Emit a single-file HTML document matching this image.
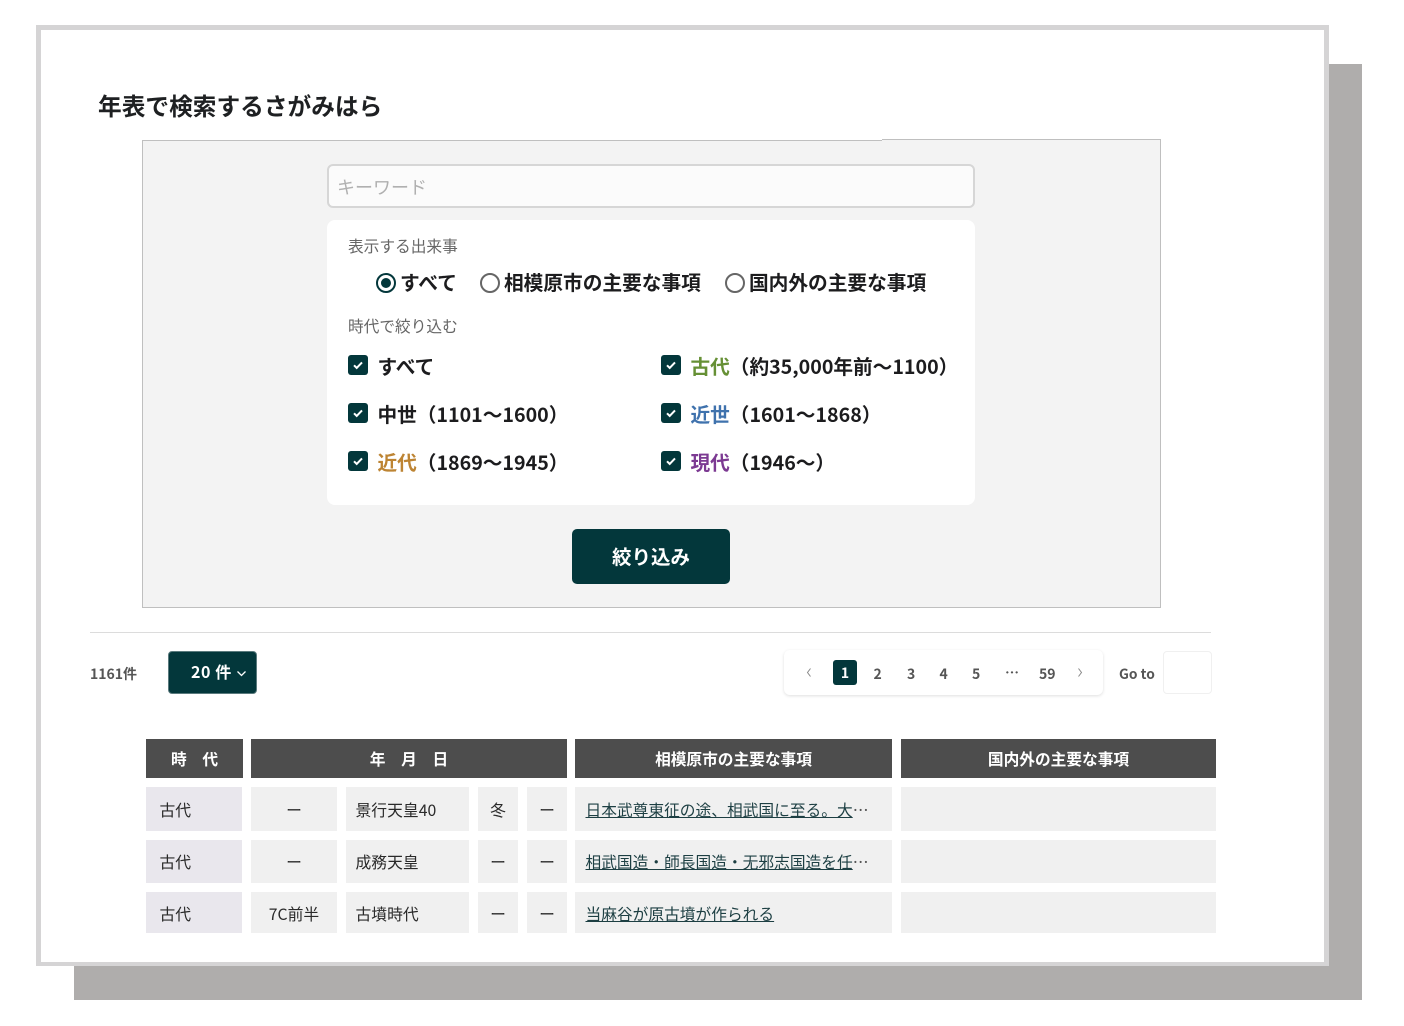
<!DOCTYPE html>
<html lang="ja">
<head>
<meta charset="utf-8">
<title>年表で検索するさがみはら</title>
<style>
html,body{margin:0;padding:0;background:#fff}
#p{position:relative;width:1404px;height:1026px;overflow:hidden;background:#fff;font-family:"Noto Sans CJK JP",sans-serif;color:#1c1c1e}
#p div,#p a,#p svg{position:absolute;box-sizing:border-box}
.t{white-space:nowrap;line-height:1}
.c{display:flex;align-items:center;justify-content:center;white-space:nowrap}
.h{background:#4d4d4d;color:#fff;font-size:15.7px;font-weight:700;height:39px;top:739px;padding-bottom:1px}
.d{background:#f0f0f0;font-size:15.8px;display:flex;align-items:center;white-space:nowrap;color:#2a2a2a}
.e{background:#e9e7ed;padding-left:13.5px}
.m{justify-content:center}
.l{padding-left:9.5px}
.r2{padding-bottom:1px}
.r3{padding-top:2px}
.lk{color:#1d3f43;text-decoration:underline;text-decoration-thickness:1.4px;font-size:15.72px}
.lb{font-size:19.65px;font-weight:700}
.cb{width:20px;height:20px;background:#03373b;border-radius:3px}
.pg{font-size:14px;font-weight:700;color:#555;line-height:1}
</style>
</head>
<body>
<div id="p">
<div style="left:74px;top:64px;width:1288px;height:936px;background:#afadac"></div>
<div style="left:36px;top:25px;width:1293px;height:941px;background:#fff;border:5px solid #d5d4d5;border-bottom-width:4px"></div>

<div class="t" style="left:98px;top:94px;font-size:23.7px;font-weight:700;color:#1e2022">年表で検索するさがみはら</div>

<div style="left:141.5px;top:139px;width:1019px;height:469px;background:#f3f3f3;border:1px solid #bfbfbf"></div>
<div style="left:141px;top:139px;width:741px;height:1px;background:#fff"></div>
<div style="left:142px;top:140px;width:740px;height:1px;background:#bfbfbf"></div>
<div style="left:327px;top:164px;width:648px;height:44px;background:#fbfbfb;border:2px solid #d6d6d6;border-radius:6px"></div>
<div class="t" style="left:337px;top:178px;font-size:18px;color:#b0b0b0">キーワード</div>

<div style="left:327px;top:220px;width:648px;height:285px;background:#fff;border-radius:8px"></div>
<div class="t" style="left:348px;top:237.5px;font-size:15.7px;color:#666">表示する出来事</div>

<div style="left:376px;top:273px;width:20px;height:20px;border:2px solid #03373b;border-radius:50%"></div>
<div style="left:381px;top:278px;width:10px;height:10px;background:#03373b;border-radius:50%"></div>
<div class="t" style="left:400px;top:272px;font-size:19.7px;font-weight:700">すべて</div>
<div style="left:480px;top:273px;width:20px;height:20px;border:2px solid #666;border-radius:50%"></div>
<div class="t" style="left:504px;top:272px;font-size:19.7px;font-weight:700">相模原市の主要な事項</div>
<div style="left:725px;top:273px;width:20px;height:20px;border:2px solid #666;border-radius:50%"></div>
<div class="t" style="left:749px;top:272px;font-size:19.7px;font-weight:700">国内外の主要な事項</div>

<div class="t" style="left:348px;top:317.5px;font-size:15.7px;color:#666">時代で絞り込む</div>

<div class="cb" style="left:348px;top:355px"><svg style="left:4px;top:4px" width="12" height="12" viewBox="0 0 12 12"><path d="M2 6.3l2.7 2.6L10 3.4" fill="none" stroke="#fff" stroke-width="2"/></svg></div>
<div class="t lb" style="left:377.5px;top:355.5px">すべて</div>
<div class="cb" style="left:348px;top:403px"><svg style="left:4px;top:4px" width="12" height="12" viewBox="0 0 12 12"><path d="M2 6.3l2.7 2.6L10 3.4" fill="none" stroke="#fff" stroke-width="2"/></svg></div>
<div class="t lb" style="left:377.5px;top:403.5px">中世（1101〜1600）</div>
<div class="cb" style="left:348px;top:451px"><svg style="left:4px;top:4px" width="12" height="12" viewBox="0 0 12 12"><path d="M2 6.3l2.7 2.6L10 3.4" fill="none" stroke="#fff" stroke-width="2"/></svg></div>
<div class="t lb" style="left:377.5px;top:451.5px"><span style="color:#bd8433">近代</span>（1869〜1945）</div>

<div class="cb" style="left:661px;top:355px"><svg style="left:4px;top:4px" width="12" height="12" viewBox="0 0 12 12"><path d="M2 6.3l2.7 2.6L10 3.4" fill="none" stroke="#fff" stroke-width="2"/></svg></div>
<div class="t lb" style="left:690.5px;top:355.5px"><span style="color:#669035">古代</span>（約35,000年前〜1100）</div>
<div class="cb" style="left:661px;top:403px"><svg style="left:4px;top:4px" width="12" height="12" viewBox="0 0 12 12"><path d="M2 6.3l2.7 2.6L10 3.4" fill="none" stroke="#fff" stroke-width="2"/></svg></div>
<div class="t lb" style="left:690.5px;top:403.5px"><span style="color:#3f72ad">近世</span>（1601〜1868）</div>
<div class="cb" style="left:661px;top:451px"><svg style="left:4px;top:4px" width="12" height="12" viewBox="0 0 12 12"><path d="M2 6.3l2.7 2.6L10 3.4" fill="none" stroke="#fff" stroke-width="2"/></svg></div>
<div class="t lb" style="left:690.5px;top:451.5px"><span style="color:#7c3a92">現代</span>（1946〜）</div>

<div class="c" style="left:572px;top:529px;width:158px;height:55px;background:#03373b;border-radius:5px;color:#fff;font-size:19.5px;font-weight:700;padding-bottom:2px">絞り込み</div>

<div style="left:90px;top:632px;width:1121px;height:1px;background:#dcdcdc"></div>

<div class="t" style="left:90px;top:667px;font-size:14px;font-weight:700;color:#555">1161件</div>
<div style="left:168px;top:651px;width:89px;height:43px;background:#03373b;border-radius:4px;border:1px solid #5a7a7d"></div>
<div class="t" style="left:191px;top:663px;font-size:16px;font-weight:700;color:#fff;letter-spacing:.6px">20 件</div>
<svg style="left:236px;top:669px" width="11" height="9" viewBox="0 0 11 9"><path d="M1.5 2.5l4 4 4-4" fill="none" stroke="#fff" stroke-width="1.3"/></svg>

<div style="left:784px;top:650px;width:319px;height:45px;background:#fff;border-radius:6px;box-shadow:0 1px 3px rgba(0,0,0,.13)"></div>
<div class="c" style="left:833px;top:660px;width:24px;height:25px;background:#03373b;border-radius:3px;color:#fff;font-size:14px;font-weight:700;padding-top:1px">1</div>
<svg style="left:805px;top:667px" width="8" height="11" viewBox="0 0 8 11"><path d="M5.5 1.5L2.5 5.5l3 4" fill="none" stroke="#888" stroke-width="1"/></svg>
<div class="t pg" style="left:873.5px;top:667px">2</div>
<div class="t pg" style="left:907px;top:667px">3</div>
<div class="t pg" style="left:939.5px;top:667px">4</div>
<div class="t pg" style="left:972px;top:667px">5</div>
<div class="t pg" style="left:1005px;top:666px">…</div>
<div class="t pg" style="left:1039px;top:667px">59</div>
<svg style="left:1076px;top:667px" width="8" height="11" viewBox="0 0 8 11"><path d="M2.5 1.5l3 4-3 4" fill="none" stroke="#888" stroke-width="1"/></svg>
<div class="t pg" style="left:1119px;top:667px;font-size:13.8px">Go to</div>
<div style="left:1163px;top:651px;width:49px;height:43px;background:#fff;border:1px solid #f0f0f0;border-radius:4px"></div>

<div class="h c" style="left:146px;width:97px">時　代</div>
<div class="h c" style="left:251px;width:316px">年　月　日</div>
<div class="h c" style="left:575px;width:317px">相模原市の主要な事項</div>
<div class="h c" style="left:901px;width:315px">国内外の主要な事項</div>

<div class="d e" style="left:146px;top:787px;width:96px;height:44px">古代</div>
<div class="d m" style="left:251px;top:787px;width:86px;height:44px">ー</div>
<div class="d l" style="left:346px;top:787px;width:123px;height:44px">景行天皇40</div>
<div class="d m" style="left:478px;top:787px;width:40px;height:44px">冬</div>
<div class="d m" style="left:527px;top:787px;width:40px;height:44px">ー</div>
<div class="d" style="left:575px;top:787px;width:317px;height:44px;padding-left:10.5px"><span class="lk">日本武尊東征の途、相武国に至る。大</span><span style="color:#555">…</span></div>
<div class="d" style="left:901px;top:787px;width:315px;height:44px"></div>

<div class="d e r2" style="left:146px;top:840px;width:96px;height:43px">古代</div>
<div class="d m r2" style="left:251px;top:840px;width:86px;height:43px">ー</div>
<div class="d l r2" style="left:346px;top:840px;width:123px;height:43px">成務天皇</div>
<div class="d m r2" style="left:478px;top:840px;width:40px;height:43px">ー</div>
<div class="d m r2" style="left:527px;top:840px;width:40px;height:43px">ー</div>
<div class="d r2" style="left:575px;top:840px;width:317px;height:43px;padding-left:10.5px"><span class="lk">相武国造・師長国造・无邪志国造を任</span><span style="color:#555">…</span></div>
<div class="d" style="left:901px;top:840px;width:315px;height:43px"></div>

<div class="d e r3" style="left:146px;top:892px;width:96px;height:41px">古代</div>
<div class="d m r3" style="left:251px;top:892px;width:86px;height:41px">7C前半</div>
<div class="d l r3" style="left:346px;top:892px;width:123px;height:41px">古墳時代</div>
<div class="d m r3" style="left:478px;top:892px;width:40px;height:41px">ー</div>
<div class="d m r3" style="left:527px;top:892px;width:40px;height:41px">ー</div>
<div class="d r3" style="left:575px;top:892px;width:317px;height:41px;padding-left:10.5px"><span class="lk">当麻谷が原古墳が作られる</span></div>
<div class="d" style="left:901px;top:892px;width:315px;height:41px"></div>
</div>
</body>
</html>
